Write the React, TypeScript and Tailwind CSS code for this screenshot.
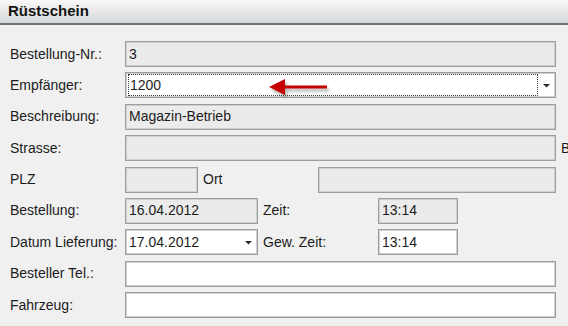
import React from "react";

type BoxProps = {
  value?: string;
  white?: boolean;
  className?: string;
  arrow?: boolean;
  focus?: boolean;
};

function Box({ value = "", white = false, className = "", arrow = false, focus = false }: BoxProps) {
  return (
    <div
      className={`relative h-[26px] flex items-center border border-[#9d9d9d] shadow-[inset_0_0_0_1px_#cfcfcf] ${
        white ? "bg-white" : "bg-[#ebebeb]"
      } ${className}`}
    >
      {focus ? (
        <div className="ml-[2px] h-[22px] flex-1 flex items-center border border-dotted border-[#3a3a3a] pl-[1px]">
          {value}
        </div>
      ) : (
        <span className="pl-[3px] flex-1">{value}</span>
      )}
      {arrow && (
        <svg width="16" height="10" viewBox="0 0 16 10" className="shrink-0 mr-[1px]">
          <path d="M5 4h7l-3.5 3.5z" fill="#2b2b2b" />
        </svg>
      )}
    </div>
  );
}

function Label({ children }: { children: React.ReactNode }) {
  return <div className="w-[115px] shrink-0">{children}</div>;
}

export default function App() {
  return (
    <div
      className="relative w-[568px] h-[326px] overflow-hidden bg-[#f0f0f0] text-[14px] text-[#1c1c1c]"
      style={{ fontFamily: '"Liberation Sans", Arial, sans-serif' }}
    >
      {/* Header */}
      <div className="h-[25px] border-b-2 border-[#6e7279] bg-gradient-to-b from-[#f8f8f8] to-[#d6d7d9] pl-[8px] flex items-center">
        <span className="text-[15px] font-bold text-[#141414]">Rüstschein</span>
      </div>

      {/* Form */}
      <div className="pl-[10px] pt-[16px] flex flex-col gap-[5.4px] w-[600px]">
        <div className="flex items-center">
          <Label>Bestellung-Nr.:</Label>
          <Box value="3" className="w-[431px]" />
        </div>
        <div className="flex items-center">
          <Label>Empfänger:</Label>
          <Box value="1200" white focus arrow className="w-[431px]" />
        </div>
        <div className="flex items-center">
          <Label>Beschreibung:</Label>
          <Box value="Magazin-Betrieb" className="w-[431px]" />
        </div>
        <div className="flex items-center">
          <Label>Strasse:</Label>
          <Box className="w-[431px]" />
          <span className="ml-[5px]">B</span>
        </div>
        <div className="flex items-center">
          <Label>PLZ</Label>
          <Box className="w-[73px]" />
          <span className="ml-[5px] w-[115px]">Ort</span>
          <Box className="w-[238px]" />
        </div>
        <div className="flex items-center">
          <Label>Bestellung:</Label>
          <Box value="16.04.2012" className="w-[133px]" />
          <span className="ml-[5px] w-[115px]">Zeit:</span>
          <Box value="13:14" className="w-[80px]" />
        </div>
        <div className="flex items-center">
          <Label>Datum Lieferung:</Label>
          <Box value="17.04.2012" white arrow className="w-[133px]" />
          <span className="ml-[5px] w-[115px]">Gew. Zeit:</span>
          <Box value="13:14" white className="w-[80px]" />
        </div>
        <div className="flex items-center">
          <Label>Besteller Tel.:</Label>
          <Box white className="w-[431px]" />
        </div>
        <div className="flex items-center">
          <Label>Fahrzeug:</Label>
          <Box white className="w-[431px]" />
        </div>
      </div>

      {/* Red annotation arrow */}
      <svg
        className="absolute left-[266px] top-[77px]"
        width="66"
        height="24"
        viewBox="0 0 66 24"
      >
        <defs>
          <filter id="sh" x="-20%" y="-50%" width="140%" height="200%">
            <feGaussianBlur stdDeviation="1.6" />
          </filter>
        </defs>
        <g filter="url(#sh)" opacity="0.45" transform="translate(2 3)">
          <path d="M3 10 L19 2 L19 8.5 L61 8.5 L61 11.5 L19 11.5 L19 18 Z" fill="#555" />
        </g>
        <path d="M3 10 L19 2 L19 8.5 L61 8.5 L61 11.5 L19 11.5 L19 18 Z" fill="#c40000" />
      </svg>
    </div>
  );
}
